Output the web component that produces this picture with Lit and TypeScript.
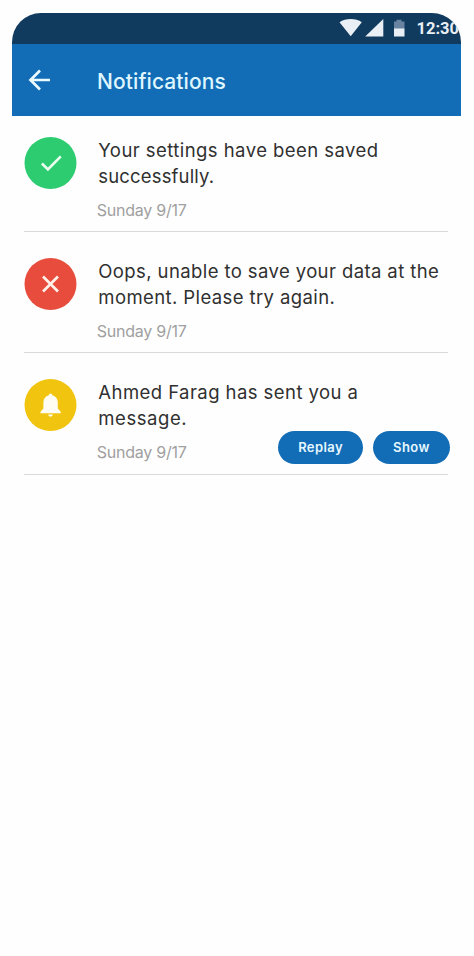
import { LitElement, html, css, svg, nothing } from "lit";
import { customElement, property } from "lit/decorators.js";
import { styleMap } from "lit/directives/style-map.js";

type Kind = "success" | "error" | "message";

interface Line {
  text: string;
  tracking: number;
}

interface Notice {
  kind: Kind;
  lines: Line[];
  date: string;
  actions?: string[];
}

const NOTICES: Notice[] = [
  {
    kind: "success",
    lines: [
      { text: "Your settings have been saved", tracking: 0.44 },
      { text: "successfully.", tracking: 0.16 },
    ],
    date: "Sunday 9/17",
  },
  {
    kind: "error",
    lines: [
      { text: "Oops, unable to save your data at the", tracking: 0.4 },
      { text: "moment. Please try again.", tracking: 0.4 },
    ],
    date: "Sunday 9/17",
  },
  {
    kind: "message",
    lines: [
      { text: "Ahmed Farag has sent you a", tracking: 0.44 },
      { text: "message.", tracking: 0.56 },
    ],
    date: "Sunday 9/17",
    actions: ["Replay", "Show"],
  },
];

const GLYPHS = {
  success: svg`<path d="M17.4 26.5l6 5.9L36.3 19.3" fill="none" stroke="#eafff0" stroke-width="2.6"/>`,
  error: svg`<path d="M18.5 18.5l15 15M33.5 18.5l-15 15" fill="none" stroke="#fff1e8" stroke-width="2.7"/>`,
  message: svg`<path d="M26 14.4c1.1 0 1.8.8 1.8 1.9 3.6.9 5.5 3.7 5.5 7.2v6l2.9 3.2v1.5H16v-1.5l2.9-3.2v-6c0-3.5 1.9-6.3 5.4-7.2 0-1.1.7-1.9 1.700-1.900zM23.700 35.500h4.700c-.1 1.200-1.100 2.100-2.400 2.100s-2.200-.9-2.300-2.100z" fill="#fffdf2"/>`,
};

@customElement("notice-item")
export class NoticeItem extends LitElement {
  @property({ attribute: false }) notice!: Notice;

  static styles = css`
    :host {
      display: block;
    }
    .row {
      position: relative;
      box-sizing: border-box;
      height: 121.4px;
      padding: 25.9px 0 0 12px;
      display: flex;
      align-items: flex-start;
    }
    .rule {
      position: absolute;
      left: 11.5px;
      right: 13px;
      bottom: 0;
      height: 1px;
      background: #d9d9d9;
    }
    .badge {
      flex: none;
      display: block;
      width: 53px;
      height: 52px;
    }
    .success {
      fill: #2ecc71;
    }
    .error {
      fill: #e74c3c;
    }
    .message {
      fill: #f1c40f;
    }
    .body {
      flex: 1;
      padding-left: 21px;
      white-space: nowrap;
    }
    .line {
      font-size: 18.5px;
      line-height: 26px;
      color: #303030;
    }
    .date {
      margin: 8px 0 0 -1.5px;
      font-size: 16px;
      line-height: 26px;
      letter-spacing: -0.25px;
      color: #a0a0a0;
    }
    .actions {
      position: absolute;
      right: 11.5px;
      bottom: 11px;
      display: flex;
      gap: 10.5px;
    }
    .action {
      box-sizing: border-box;
      height: 32.5px;
      padding: 0 19.8px 1px;
      border: 0;
      border-radius: 17px;
      background: #126db6;
      color: #e6f7ff;
      font: 600 13px/31px Inter, "Noto Sans", sans-serif;
      letter-spacing: 0.4px;
    }
  `;

  render() {
    const { kind, lines, date, actions } = this.notice;
    return html`
      <div class="row">
        <svg class="badge ${kind}" viewBox="-0.5 0 53 52">
          <circle cx="26" cy="26" r="26" />
          ${GLYPHS[kind]}
        </svg>
        <div class="body">
          ${lines.map(
            (l) => html`<div class="line" style=${styleMap({ letterSpacing: `${l.tracking}px` })}>${l.text}</div>`
          )}
          <div class="date">${date}</div>
        </div>
        ${actions
          ? html`<div class="actions">${actions.map((a) => html`<button class="action">${a}</button>`)}</div>`
          : nothing}
        <div class="rule"></div>
      </div>
    `;
  }
}

@customElement("app-root")
export class AppRoot extends LitElement {
  static styles = css`
    :host {
      display: block;
      box-sizing: border-box;
      height: 956px;
      padding: 12.5px 13px 0 12.3px;
      background: #fefefe;
      font-family: Inter, "Noto Sans", sans-serif;
    }
    .screen {
      border-radius: 29px 29px 0 0;
      overflow: hidden;
    }
    .status {
      height: 31px;
      background: #103a5e;
      display: flex;
      align-items: center;
      justify-content: flex-end;
    }
    .signals {
      flex: none;
      width: 67px;
      height: 20px;
      margin-right: 11px;
    }
    .clock {
      width: 44.5px;
      white-space: nowrap;
      font: 700 16.5px/31px Roboto, sans-serif;
      color: #e9eff5;
      padding-top: 1px;
    }
    .bar {
      height: 72.5px;
      background: #126db6;
      display: flex;
      align-items: center;
    }
    .back {
      width: 24px;
      height: 24px;
      margin: 1px 0 0 15px;
    }
    .title {
      margin: 4px 0 0 45.7px;
      font-size: 21px;
      font-weight: 500;
      line-height: 28px;
      letter-spacing: 0.1px;
      color: #dff6ff;
    }
    .list {
      margin-top: -5.3px;
    }
  `;

  render() {
    return html`
      <div class="screen">
        <div class="status">
          <svg class="signals" viewBox="0 0 67 20">
            <path d="M0.5 4.2C6.500-.200 17-.200 22.800 4.200L11.700 18.300z" fill="#e9eff5" />
            <path d="M44.300 1v17.500H26.200z" fill="#e9eff5" />
            <path d="M57.500 1.800h5v1.700h3v7.500H55V3.500h2.500z" fill="#6984a0" />
            <path d="M55 10.500h10.500v8H55z" fill="#e9eff5" />
          </svg>
          <div class="clock">12:30</div>
        </div>
        <div class="bar">
          <svg class="back" viewBox="0 0 24 24" fill="none" stroke="#eafaff" stroke-width="2.7">
            <path d="M23 12H3.5M13 2.500L3.500 12l9.500 9.500" />
          </svg>
          <div class="title">Notifications</div>
        </div>
        <div class="list">${NOTICES.map((n) => html`<notice-item .notice=${n}></notice-item>`)}</div>
      </div>
    `;
  }
}
